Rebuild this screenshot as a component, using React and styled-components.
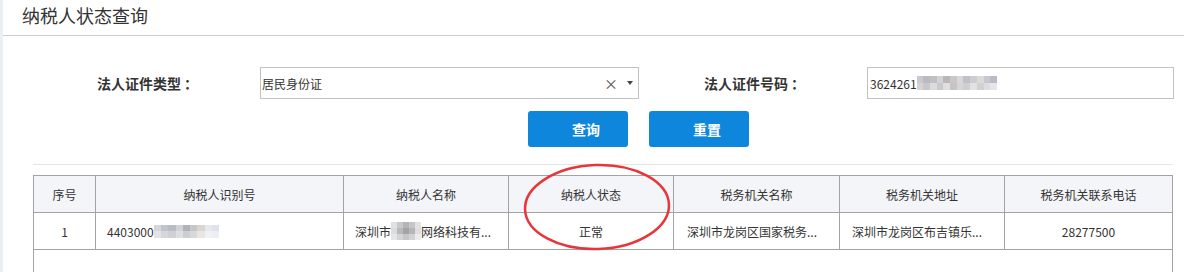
import React from "react";
import styled, { createGlobalStyle } from "styled-components";

const GlobalStyle = createGlobalStyle`
  * {
    box-sizing: border-box;
  }
  body {
    margin: 0;
    background: #fff;
    font-family: "Microsoft YaHei", "Noto Sans CJK SC", sans-serif;
    color: #333;
  }
`;

const columns = [
  { key: "no", title: "序号", width: 62 },
  { key: "id", title: "纳税人识别号", width: 248 },
  { key: "name", title: "纳税人名称", width: 165 },
  { key: "status", title: "纳税人状态", width: 165 },
  { key: "office", title: "税务机关名称", width: 166 },
  { key: "address", title: "税务机关地址", width: 165 },
  { key: "phone", title: "税务机关联系电话", width: 167 }
];

// 打码用的马赛克颜色
const inputMosaic = [
  ["#c9c9cd", "#b9bbc2", "#c3c0c2", "#d3d3d7", "#bdb6b6", "#c8c8cc", "#d8d8da", "#c0c2c8", "#cdcdd0", "#dadada", "#c6c8ce", "#b8bcc6"],
  ["#d6d3d2", "#c8c8cc", "#dcdcdf", "#cbc9c9", "#e0dfe0", "#c9c3c2", "#d6d6d9", "#cfcfd3", "#e2e2e4", "#d2d0d0", "#dcdde0", "#e6e6ea"]
];
const idMosaic = [
  ["#d4d6dc", "#c2c4cc", "#b8bcc4", "#cfd1d6", "#aeb2ba", "#c8c6c8", "#d9d5d0", "#e6e8ee", "#dfe2ea"],
  ["#e2e4e8", "#d6d7dc", "#cfd0d4", "#dedfe2", "#cdced2", "#dad8d6", "#e9e6e2", "#f0f1f4", "#eceef4"]
];
const nameMosaic = [
  ["#e0e0e2", "#c8c8ca", "#b4b4b6", "#c6c6c8", "#e2e2e4"],
  ["#dcdcde", "#b9b9bb", "#a3a3a5", "#b6b6b8", "#dedee0"],
  ["#e6e6e8", "#d4d4d6", "#c6c6c8", "#d2d2d4", "#ebebed"]
];

function Mosaic({ rows, cell, h }) {
  return (
    <MosaicBox $h={h}>
      {rows.map((row, i) => (
        <MosaicRow key={i}>
          {row.map((c, j) => (
            <MosaicCell key={j} $w={cell} $c={c} />
          ))}
        </MosaicRow>
      ))}
    </MosaicBox>
  );
}

export default function App() {
  return (
    <>
      <GlobalStyle />
      <Page>
        <TitleBar>纳税人状态查询</TitleBar>
        <Body>
          <FormRow>
            <Label>
              法人证件类型<Colon>：</Colon>
            </Label>
            <SelectBox>
              <span>居民身份证</span>
              <SelectTools>
                <Clear>×</Clear>
                <Caret />
              </SelectTools>
            </SelectBox>
            <Label>
              法人证件号码<Colon>：</Colon>
            </Label>
            <InputBox>
              <span>3624261</span>
              <Mosaic rows={inputMosaic} cell={6.7} h={14} />
            </InputBox>
          </FormRow>

          <Actions>
            <Button>查询</Button>
            <Button>重置</Button>
          </Actions>

          <Divider />

          <GridBox>
            <Table>
              <colgroup>
                {columns.map(col => (
                  <Col key={col.key} $w={col.width} />
                ))}
              </colgroup>
              <thead>
                <tr>
                  {columns.map(col => (
                    <Th key={col.key}>{col.title}</Th>
                  ))}
                </tr>
              </thead>
              <tbody>
                <tr>
                  <Td $align="center">1</Td>
                  <Td $align="left" $pad={11}>
                    <Inline>
                      4403000
                      <Mosaic rows={idMosaic} cell={7.3} h={13} />
                    </Inline>
                  </Td>
                  <Td $align="left" $pad={11}>
                    <Inline>
                      深圳市
                      <Mosaic rows={nameMosaic} cell={6} h={18} />
                      网络科技有...
                    </Inline>
                  </Td>
                  <Td $align="center">正常</Td>
                  <Td $align="left" $pad={13}>深圳市龙岗区国家税务...</Td>
                  <Td $align="left" $pad={12}>深圳市龙岗区布吉镇乐...</Td>
                  <Td $align="center">28277500</Td>
                </tr>
              </tbody>
            </Table>
          </GridBox>
        </Body>

        <Mark width="154" height="92" viewBox="0 0 154 92">
          <ellipse cx="77" cy="46" rx="72" ry="42" transform="rotate(-2 77 46)" />
        </Mark>
      </Page>
    </>
  );
}

const Page = styled.div`
  position: relative;
  height: 272px;
  border-left: 3px solid #eceff2;
  overflow: hidden;
`;

const TitleBar = styled.div`
  height: 36px;
  padding-left: 19px;
  font-size: 18px;
  line-height: 30px;
  color: #333;
  border-bottom: 1px solid #cdcdcd;
`;

const Body = styled.div`
  padding: 0 11px 0 30px;
`;

const FormRow = styled.div`
  margin-top: 31px;
  padding-left: 64px;
  display: grid;
  grid-template-columns: 98px 379px 98px 307px;
  column-gap: 65px;
  align-items: center;
`;

const Label = styled.div`
  font-size: 14px;
  font-weight: 700;
  color: #333;
  white-space: nowrap;
  line-height: 20px;
`;

const Colon = styled.span`
  margin-left: 3px;
`;

const Field = styled.div`
  height: 32px;
  border: 1px solid #c2c2c2;
  display: flex;
  align-items: center;
  font-size: 12px;
  color: #333;
  background: #fff;
`;

const SelectBox = styled(Field)`
  padding-left: 1px;
  justify-content: space-between;
`;

const SelectTools = styled.div`
  display: flex;
  align-items: center;
  gap: 9px;
  padding-right: 5px;
`;

const Clear = styled.span`
  font-size: 14px;
  color: #555;
  line-height: 1;
`;

const Caret = styled.span`
  width: 0;
  height: 0;
  border-left: 3.5px solid transparent;
  border-right: 3.5px solid transparent;
  border-top: 4px solid #444;
`;

const InputBox = styled(Field)`
  padding-left: 2px;
`;

const MosaicBox = styled.span`
  display: inline-flex;
  flex-direction: column;
  justify-content: center;
  height: ${p => p.$h}px;
  filter: blur(0.5px);
  vertical-align: middle;
`;

const MosaicRow = styled.span`
  display: flex;
  flex: 1;
`;

const MosaicCell = styled.span`
  width: ${p => p.$w}px;
  background: ${p => p.$c};
`;

const Actions = styled.div`
  margin-top: 12px;
  padding-left: 495px;
  display: flex;
  gap: 21px;
`;

const Button = styled.button`
  width: 100px;
  height: 36px;
  padding: 0 0 0 16px;
  border: none;
  border-radius: 3px;
  background: #0d86dc;
  color: #fff;
  font-family: inherit;
  font-size: 14px;
  font-weight: 700;
  cursor: pointer;
`;

const Divider = styled.div`
  margin-top: 17px;
  height: 1px;
  background: #e4e4e4;
`;

const GridBox = styled.div`
  margin-top: 10px;
  height: 140px;
  border: 1px solid #a3a3a3;
`;

const Table = styled.table`
  width: 100%;
  table-layout: fixed;
  border-collapse: separate;
  border-spacing: 0;
  font-size: 12px;
`;

const Col = styled.col`
  width: ${p => p.$w}px;
`;

const Th = styled.th`
  height: 37px;
  padding: 0 6px;
  background: #f4f5f9;
  font-weight: 400;
  color: #333;
  text-align: center;
  border-right: 1px solid #a3a3a3;
  border-bottom: 1px solid #a3a3a3;
  &:last-child {
    border-right: none;
  }
`;

const Td = styled.td`
  height: 37px;
  padding: 0 ${p => p.$pad || 6}px;
  color: #333;
  text-align: ${p => p.$align};
  white-space: nowrap;
  overflow: hidden;
  border-right: 1px solid #a3a3a3;
  border-bottom: 1px solid #a3a3a3;
  &:last-child {
    border-right: none;
  }
`;

const Inline = styled.span`
  display: inline-flex;
  align-items: center;
`;

const Mark = styled.svg`
  position: absolute;
  left: 517px;
  top: 161px;
  pointer-events: none;
  & ellipse {
    fill: none;
    stroke: #e8353a;
    stroke-width: 2.5;
  }
`;
